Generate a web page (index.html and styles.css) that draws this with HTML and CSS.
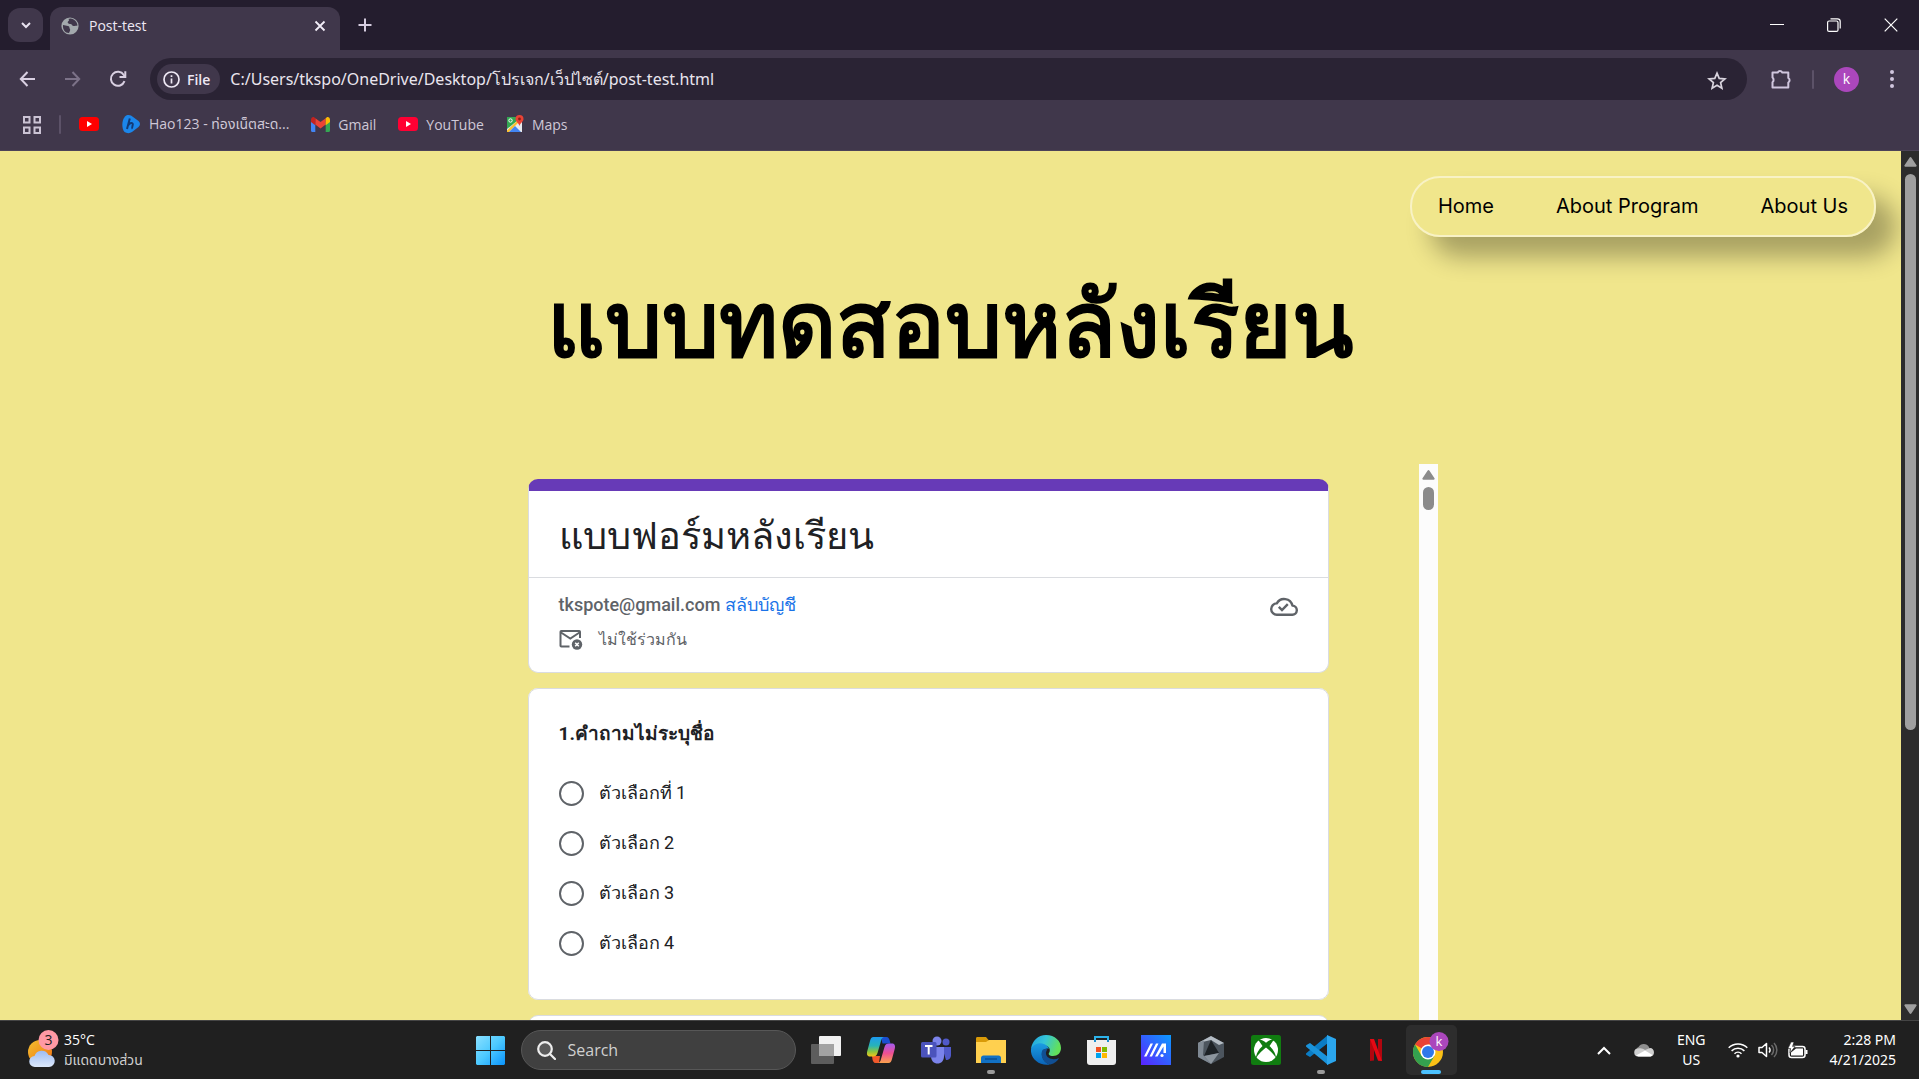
FILE: index.html
```html
<!DOCTYPE html>
<html lang="th">
<head>
<meta charset="utf-8">
<title>Post-test</title>
<meta name="viewport" content="width=device-width, initial-scale=1">
<link rel="stylesheet" href="styles.css">
</head>
<body>
<div class="desktop">

  <header class="browser">
    <div class="tabstrip">
      <button class="tab-search" aria-label="Search tabs"><svg width="12" height="12" viewBox="0 0 12 12" fill="none" stroke="#e8e2f0" stroke-width="2"><path d="M2 4l4 4 4-4"/></svg></button>
      <div class="tab">
        <svg width="18" height="18" viewBox="0 0 18 18"><circle cx="9" cy="9" r="8.6" fill="#a3a9ad"/><path d="M2 8c2 0 3 1 5 1 2 .3 1 2 2 3 .6 1.500-.5 2.500-1 4C4 16 1.600 12.500 2 8zM7 2c2 .5 1 1.500 0 2.500C6 5.500 7.500 7 9.500 7c1.500 0 1.500 2 3 2s2.500-.5 4-.6C16 5 13.500 2 9.500 1.600z" fill="#40374b"/></svg>
        <span class="tab-title">Post-test</span>
        <button class="icon-btn" aria-label="Close tab"><svg width="12" height="12" viewBox="0 0 12 12" stroke="#f2edf8" stroke-width="1.800"><path d="M1.500 1.500l9 9M10.500 1.500l-9 9"/></svg></button>
      </div>
      <button class="icon-btn new-tab" aria-label="New tab"><svg width="14" height="14" viewBox="0 0 14 14" stroke="#d6cde0" stroke-width="2"><path d="M7 .5v13M.5 7h13"/></svg></button>
      <div class="window-controls">
        <button class="win-btn" aria-label="Minimize"><svg width="14" height="14" viewBox="0 0 14 14" stroke="#fff"><path d="M0 6.500h14"/></svg></button>
        <button class="win-btn" aria-label="Restore"><svg width="14" height="14" viewBox="0 0 14 14" fill="none" stroke="#fff" stroke-width="1.200"><rect x=".6" y="3" width="10.400" height="10.400" rx="1.500"/><path d="M3.500 .8h7a2.700 2.700 0 0 1 2.700 2.700v7"/></svg></button>
        <button class="win-btn" aria-label="Close"><svg width="14" height="14" viewBox="0 0 14 14" stroke="#fff" stroke-width="1.200"><path d="M.7 .7l12.600 12.600M13.300 .7L.7 13.300"/></svg></button>
      </div>
    </div>

    <div class="toolbar">
      <button class="tool-btn" aria-label="Back"><svg width="17" height="16" viewBox="0 0 17 16" fill="none" stroke="#d9d0e2" stroke-width="2"><path d="M16 8H2M8.500 1L1.800 8l6.700 7"/></svg></button>
      <button class="tool-btn" aria-label="Forward"><svg width="17" height="16" viewBox="0 0 17 16" fill="none" stroke="#7c7288" stroke-width="2"><path d="M1 8h14M8.500 1l6.700 7-6.700 7"/></svg></button>
      <button class="tool-btn" aria-label="Reload"><svg width="18" height="18" viewBox="0 0 18 18" fill="none" stroke="#d9d0e2" stroke-width="2"><path d="M15.500 11.200A7 7 0 1 1 14.800 5L16 6.500"/><path d="M16.300 1.200v5.800h-5.800"/></svg></button>
      <div class="omnibox">
        <button class="chip"><svg width="17" height="17" viewBox="0 0 17 17" fill="none" stroke="#eee8f4" stroke-width="1.700"><circle cx="8.500" cy="8.500" r="7.500"/><path d="M8.500 7.500v5M8.500 4.200v1.900"/></svg>File</button>
        <input class="url" type="text" aria-label="Address" value="C:/Users/tkspo/OneDrive/Desktop/โปรเจก/เว็ปไซต์/post-test.html">
        <button class="icon-btn" aria-label="Bookmark this page"><svg width="20" height="20" viewBox="0 0 20 20" fill="none" stroke="#d9d4de" stroke-width="1.700"><path d="M10 2.200l2.200 5.200 5.700.5-4.300 3.700 1.300 5.600L10 14.200l-4.900 3 1.300-5.600L2.100 7.900l5.700-.5z"/></svg></button>
      </div>
      <button class="tool-btn ext" aria-label="Extensions"><svg width="22" height="22" viewBox="0 0 22 22"><path d="M2.500 4.500h5.200a2.600 2.600 0 0 1 4.600 0h6v5.500a2.600 2.600 0 0 1 0 4.500v5H2.500v-5.300a3 3 0 0 0 0-4.600z" fill="none" stroke="#d0c6de" stroke-width="2" stroke-linejoin="round"/></svg></button>
      <span class="divider"></span>
      <button class="avatar" aria-label="Profile">k</button>
      <button class="tool-btn menu" aria-label="Menu"><svg width="6" height="20" viewBox="0 0 6 20" fill="#d0c6de"><circle cx="3" cy="3" r="2"/><circle cx="3" cy="10" r="2"/><circle cx="3" cy="17" r="2"/></svg></button>
    </div>

    <nav class="bookmarks" aria-label="Bookmarks">
      <button class="icon-btn apps" aria-label="Apps"><svg width="18" height="18" viewBox="0 0 18 18" fill="none" stroke="#cbc3d4" stroke-width="2"><path d="M1 1h5.500v5.500H1zM11.500 1H17v5.500h-5.500zM1 11.500h5.500V17H1zM11.500 11.500H17V17h-5.500z"/></svg></button>
      <span class="divider"></span>
      <a href="#" aria-label="YouTube"><svg width="20" height="14" viewBox="0 0 20 14"><rect width="20" height="14" rx="3.500" fill="#f00"/><path d="M8 4l5 3-5 3z" fill="#fff"/></svg></a>
      <a href="#"><svg width="20" height="20" viewBox="0 0 20 20"><path d="M4 2.500C6 .5 8 .6 10 1.500l7.500 5.500c2 2 2 4 0 6L11 18c-2 1.500-5.500 1.500-7.500 0C.5 14.500 .5 6.500 4 2.500z" fill="#1b86ea"/><path d="M8.800 4.500L6 15M7 11.500c1.500-3 5-3.500 4.800-1-.2 1.700-1.300 3.500-.3 4.200" fill="none" stroke="#123a75" stroke-width="2"/></svg>Hao123 - ท่องเน็ตสะด...</a>
      <a href="#"><svg width="19" height="15" viewBox="0 0 19 15"><path d="M0 3v10.500C0 14.400.6 15 1.400 15H4.300V5z" fill="#4285f4"/><path d="M19 3v10.500c0 .9-.6 1.500-1.400 1.500h-2.900V5z" fill="#34a853"/><path d="M4.300 1.200v6.400L9.500 11.500l5.200-3.900V1.200L9.500 5.100z" fill="#ea4335"/><path d="M0 3v2l4.300 3.200v-7L3.400.5C2 -.5 0 .5 0 3z" fill="#c5221f"/><path d="M19 3v2l-4.300 3.200v-7l.9-.7C17 -.5 19 .5 19 3z" fill="#fbbc04"/></svg>Gmail</a>
      <a href="#"><svg width="20" height="14" viewBox="0 0 20 14"><rect width="20" height="14" rx="3.500" fill="#ff0033"/><path d="M8 4l5 3-5 3z" fill="#fff"/></svg>YouTube</a>
      <a href="#"><svg width="18" height="18" viewBox="0 0 18 18"><path d="M1 2h15v15H1z" fill="#e8eaed"/><path d="M1 2h10.500v3.500L1 14z" fill="#34a853"/><path d="M1 15.500L11 6l1.500 1.500L3 17H1z" fill="#fbc02d"/><path d="M3 17l6-6 6 6z" fill="#4285f4"/><circle cx="4.500" cy="5.500" r="1.700" fill="none" stroke="#fff"/><path d="M13.500 0a4 4 0 0 1 4 4c0 2.500-3 3.500-4 7-1-3.500-4-4.500-4-7a4 4 0 0 1 4-4z" fill="#ea4335"/><circle cx="13.500" cy="4" r="1.400" fill="#8c1d13"/></svg>Maps</a>
    </nav>
  </header>

  <div class="viewport">
    <main class="page">
      <nav class="site-nav" aria-label="Site">
        <a href="#">Home</a>
        <a href="#">About Program</a>
        <a href="#">About Us</a>
      </nav>
      <h1>แบบทดสอบหลังเรียน</h1>
      <div class="embed">
        <form class="form">
          <section class="card card-head">
            <h2>แบบฟอร์มหลังเรียน</h2>
            <div class="account">
              <div class="account-info">
                <p><strong>tkspote@gmail.com</strong> <a href="#">สลับบัญชี</a></p>
                <p class="shared"><svg width="24" height="22" viewBox="0 0 24 22"><path d="M10.500 17.500H2.300c-.5 0-.8-.3-.8-.8V2.800c0-.5.3-.8.8-.8h17.900c.5 0 .8.300.8.800V9M2 3.500l9.300 6 9.200-6" fill="none" stroke="#5f6368" stroke-width="2"/><circle cx="18" cy="15.500" r="5.200" fill="#5f6368"/><path d="M16.200 13.700l3.600 3.600M19.800 13.700l-3.600 3.600" stroke="#fff" stroke-width="1.500"/></svg><span>ไม่ใช้ร่วมกัน</span></p>
              </div>
              <svg class="cloud" width="28" height="20" viewBox="0 0 28 20" fill="none" stroke="#5f6368" stroke-width="2.400"><path d="M7 18.800h15a4.600 4.600 0 0 0 .4-9.200A8.400 8.400 0 0 0 6.800 7.400 5.700 5.700 0 0 0 7 18.800z" stroke-linejoin="round"/><path d="M8.800 10.800l3.200 3.200 5.800-5.900"/></svg>
            </div>
          </section>
          <fieldset class="card question">
            <legend>1.คำถามไม่ระบุชื่อ</legend>
            <label><input type="radio" name="q1">ตัวเลือกที่ 1</label>
            <label><input type="radio" name="q1">ตัวเลือก 2</label>
            <label><input type="radio" name="q1">ตัวเลือก 3</label>
            <label><input type="radio" name="q1">ตัวเลือก 4</label>
          </fieldset>
          <section class="card next"></section>
        </form>
        <div class="scrollbar light">
          <svg width="13" height="10" viewBox="0 0 13 10" fill="#8b8b8b"><path d="M5.500 .8a1.200 1.200 0 0 1 2 0l5 7.500a1 1 0 0 1-.9 1.500H1.400a1 1 0 0 1-.9-1.500z"/></svg>
          <span class="thumb"></span>
        </div>
      </div>
    </main>
    <div class="scrollbar dark">
      <svg width="13" height="10" viewBox="0 0 13 10" fill="#9f9f9f"><path d="M5.500 .8a1.200 1.200 0 0 1 2 0l5 7.500a1 1 0 0 1-.9 1.500H1.400a1 1 0 0 1-.9-1.500z"/></svg>
      <span class="track"><span class="thumb"></span></span>
      <svg width="13" height="10" viewBox="0 0 13 10" fill="#9f9f9f"><path d="M5.500 9.200a1.200 1.200 0 0 0 2 0l5-7.500a1 1 0 0 0-.9-1.500H1.400a1 1 0 0 0-.9 1.500z"/></svg>
    </div>
  </div>

  <footer class="taskbar">
    <button class="weather">
      <svg width="32" height="38" viewBox="0 0 32 38"><defs><linearGradient id="sun" x1="0" y1="0" x2="1" y2="1"><stop offset="0" stop-color="#f3c02f"/><stop offset="1" stop-color="#f06f12"/></linearGradient><linearGradient id="cl" x1="0" y1="0" x2="0" y2="1"><stop offset="0" stop-color="#9dbcf3"/><stop offset="1" stop-color="#dce8fb"/></linearGradient></defs><circle cx="13" cy="22" r="12" fill="url(#sun)"/><path d="M8 37a5.500 5.500 0 0 1-.5-11 7.500 7.500 0 0 1 14-1A6 6 0 0 1 22 37z" fill="url(#cl)"/><circle cx="21.500" cy="10" r="10" fill="#ff99a4"/><text x="21.500" y="15" text-anchor="middle" class="badge-num">3</text></svg>
      <span class="weather-text"><span>35°C</span><small>มีแดดบางส่วน</small></span>
    </button>

    <div class="dock">
      <button class="app" aria-label="Start"><svg width="29" height="29" viewBox="0 0 29 29"><defs><linearGradient id="win" x1="0" y1="0" x2="1" y2="1"><stop offset="0" stop-color="#8ae0ff"/><stop offset=".5" stop-color="#4cc9ff"/><stop offset="1" stop-color="#0a93fb"/></linearGradient></defs><path d="M1 0h13v14H0V1zM15 0h13l1 1v13H15zM0 15h14v14H1l-1-1zM15 15h14v13l-1 1H15z" fill="url(#win)"/></svg></button>
      <label class="search"><svg width="19" height="19" viewBox="0 0 19 19" fill="none" stroke="#eee" stroke-width="2.200"><circle cx="8" cy="8" r="6.800" fill="#5b5b5b"/><path d="M13 13l5 5" stroke-linecap="round"/></svg><input type="search" placeholder="Search" aria-label="Search"></label>
      <button class="app" aria-label="Task view"><svg width="30" height="28" viewBox="0 0 30 28"><rect x="8" width="22" height="20" rx="1" fill="#f1f1f1"/><rect y="8" width="23" height="20" rx="1" fill="#5d5d5d"/><path d="M8 8h15v12H8z" fill="#a3a3a3"/></svg></button>
      <button class="app" aria-label="Copilot"><svg width="30" height="28" viewBox="0 0 30 28"><defs><linearGradient id="cp1" x1="0" y1="0" x2="0" y2="1"><stop offset="0" stop-color="#1d9bf0"/><stop offset=".45" stop-color="#27b3b8"/><stop offset=".75" stop-color="#8bc63f"/><stop offset="1" stop-color="#f5c518"/></linearGradient><linearGradient id="cp2" x1="0" y1="0" x2="0" y2="1"><stop offset="0" stop-color="#a45bf0"/><stop offset=".5" stop-color="#ee4f93"/><stop offset="1" stop-color="#fba34d"/></linearGradient></defs><path d="M15 1h5.500c2 0 2.500 1.500 3 3l1 3.500h-8z" fill="#1b4fd1"/><path d="M6 20h8l-1 7H9.500c-2 0-2.500-2-3-3.500z" fill="#f0592b"/><path d="M7.500 1H18c-2 .5-2.500 2-3 4l-3.500 12c-.7 2.500-2 3.500-4.500 3.500H4C1 20.500 .5 18 1.300 15L4 5c.7-2.500 1.500-4 3.500-4z" fill="url(#cp1)"/><path d="M22.500 27H12c2-.5 2.500-2 3-4l3.500-12c.7-2.500 2-3.500 4.500-3.500h3c3 0 3.500 2.500 2.700 5.500L26 23c-.7 2.500-1.500 4-3.500 4z" fill="url(#cp2)"/></svg></button>
      <button class="app" aria-label="Teams"><svg width="30" height="28" viewBox="0 0 30 28"><circle cx="25" cy="6" r="3.500" fill="#5059c9"/><path d="M21 11h9v8c0 3-2 5-5 5z" fill="#5059c9"/><circle cx="16" cy="5" r="4.500" fill="#7b83eb"/><path d="M10 11h13v9c0 5-3 7.500-6.500 7.500S10 25 10 20z" fill="#7b83eb"/><rect y="6" width="15.500" height="15.500" rx="1.500" fill="#4b53bc"/><path d="M4 10h7.500M7.700 10v8.500" stroke="#fff" stroke-width="2"/></svg></button>
      <button class="app running" aria-label="File Explorer"><svg width="30" height="28" viewBox="0 0 30 28"><path d="M0 2.500C0 1.500.5 1 1.500 1H10l3 3.500V10H0z" fill="#d99a08"/><path d="M0 6h10l3-2h17v23H0z" fill="#ffd04f"/><path d="M5 27v-5c0-1.500 1-2.500 2.500-2.500h15c1.500 0 2.500 1 2.500 2.500v5z" fill="#1271c4"/><path d="M9 23h12" stroke="#0a4f93" stroke-width="1.500"/></svg></button>
      <button class="app" aria-label="Edge"><svg width="30" height="30" viewBox="0 0 30 30"><defs><linearGradient id="e1" x1="0" y1="0" x2="1" y2=".3"><stop offset="0" stop-color="#1ea0de"/><stop offset=".5" stop-color="#35c5d8"/><stop offset="1" stop-color="#62e05a"/></linearGradient><linearGradient id="e2" x1="0" y1="0" x2="0" y2="1"><stop offset="0" stop-color="#1b9de2"/><stop offset="1" stop-color="#0a63b8"/></linearGradient></defs><path d="M0 14C1 6 7 0 15 0c9 0 15 6 15 13 0 5-3.500 8-8 8-3.500 0-5-1.500-4-3 2-2.500.5-7.500-4.500-7.500C8 10.500 3 11 0 14z" fill="url(#e1)"/><path d="M0 14c3-5.500 9-6.500 13-5 3 1 4.500 3 5 5-1.500-1-6-.5-7 4-1 5 4 11 8 11.500C9 31.500-1 24 0 14z" fill="url(#e2)"/><path d="M11.500 15c-3 6 1.500 14 8 14.500 4-1 7-3.500 8.500-6.500-5 2.500-12 1-13-4-.3-2 .5-3.500 1.500-4.500-2-.8-4-.5-5 .5z" fill="#114f93"/></svg></button>
      <button class="app" aria-label="Microsoft Store"><svg width="29" height="30" viewBox="0 0 29 30"><path d="M8 7V2h13v5" fill="none" stroke="#2cb3ea" stroke-width="2"/><path d="M0 5h29v22a3 3 0 0 1-3 3H3a3 3 0 0 1-3-3z" fill="#efefef"/><path d="M8 5v2M21 5v2" stroke="#1d8fd0" stroke-width="2"/><path d="M9 12h5v5H9z" fill="#f25022"/><path d="M15 12h5v5h-5z" fill="#7fba00"/><path d="M9 18h5v5H9z" fill="#00a4ef"/><path d="M15 18h5v5h-5z" fill="#ffb900"/></svg></button>
      <button class="app" aria-label="MyASUS"><svg width="30" height="30" viewBox="0 0 30 30"><defs><linearGradient id="as" x1="0" y1="1" x2="1" y2="0"><stop offset="0" stop-color="#5b22ff"/><stop offset="1" stop-color="#0b9bff"/></linearGradient></defs><path d="M0 0h30v30H0z" fill="url(#as)"/><path d="M3 21.500L9.500 8.500H12L5.500 21.500zM8.500 21.500L15 8.500h2.500L11 21.500zM14 21.500L21 8.500h4V18h-2.500v-6.500L16.500 21.500z" fill="#fff"/><circle cx="21" cy="20.500" r="1.600" fill="#fff"/></svg></button>
      <button class="app" aria-label="Armoury Crate"><svg width="26" height="28" viewBox="0 0 26 28"><path d="M13 0l13 7v14l-13 7L0 21V7z" fill="#4c555e"/><path d="M13 0l13 7-5 2-8-5L0 7z" fill="#b4bcc4"/><path d="M0 7l6-2.500L5 19l8 9L0 21z" fill="#7f8993"/><path d="M13 4l8 13-15 3z" fill="#1d2226"/><path d="M6 20l15-3-8 11z" fill="#8c959e"/></svg></button>
      <button class="app" aria-label="Xbox"><svg width="30" height="30" viewBox="0 0 30 30"><rect width="30" height="30" rx="2.500" fill="#107c10"/><circle cx="15" cy="15" r="12" fill="#fff"/><path d="M7 4.500c3-.3 6 1.500 8 3.300 2-1.800 5-3.600 8-3.300L18.500 11c4 3.500 6.500 8.500 6.500 12-2.500-4-6.500-8-10-10.500C11.500 15 7.500 19 5 23c0-3.500 2.500-8.500 6.500-12z" fill="#107c10"/></svg></button>
      <button class="app running" aria-label="Visual Studio Code"><svg width="30" height="30" viewBox="0 0 30 30"><path d="M22 8L4 22l-3.500-2c-.7-.7-.7-1.500 0-2L22 0z" fill="#0b7cc4"/><path d="M22 22L4 8 .5 10c-.7.700-.7 1.500 0 2L22 30z" fill="#1a93da"/><path d="M21 0l9 4v22l-9 4z" fill="#2ba6ee"/></svg></button>
      <button class="app" aria-label="Netflix"><svg width="12" height="22" viewBox="0 0 12 22"><path d="M0 0h4v21.500L0 22zM8 0h4v22l-4-.5z" fill="#b1060f"/><path d="M0 0h4l8 22-4-.5z" fill="#e50914"/></svg></button>
      <button class="app active" aria-label="Chrome"><svg width="36" height="36" viewBox="0 0 36 36"><circle cx="15" cy="20" r="15" fill="#fbc116"/><path d="M15 20L2 12.500A15 15 0 0 1 28 12.500H15z" fill="#ea4335"/><path d="M2 12.500A15 15 0 0 0 15 35l6.500-11.300L15 20 8.500 23.700z" fill="#34a04f"/><circle cx="15" cy="20" r="7.500" fill="#fff"/><circle cx="15" cy="20" r="6" fill="#2f78ea"/><circle cx="26" cy="9.500" r="9.500" fill="#ab47bc"/><text x="26" y="14" text-anchor="middle" class="badge-k">k</text></svg></button>
    </div>

    <div class="tray">
      <button class="icon-btn" aria-label="Hidden icons"><svg width="14" height="9" viewBox="0 0 14 9" fill="none" stroke="#fff" stroke-width="2"><path d="M1 8l6-6 6 6"/></svg></button>
      <svg class="onedrive" width="20" height="14" viewBox="0 0 20 14"><path d="M5 13a5 5 0 0 1-.5-9A6 6 0 0 1 15 4l2 8z" fill="#8e8e8e"/><path d="M4.500 13.500a4 4 0 0 1-.5-8c3-.8 5 0 7 1.500l5-2a4.300 4.300 0 0 1 .5 8.500z" fill="#cfcfcf"/><path d="M2 12.500L11 7.500l7.500 4.500a4 4 0 0 1-2 1.500h-12z" fill="#fff"/></svg>
      <button class="lang"><span>ENG</span><span>US</span></button>
      <button class="status" aria-label="Network, sound, battery">
        <svg width="20" height="16" viewBox="0 0 20 16" fill="none" stroke="#fff" stroke-width="1.500"><path d="M.7 5.800a13 13 0 0 1 18.600 0M3.600 8.900a9 9 0 0 1 12.800 0M6.500 11.700a5 5 0 0 1 7 0"/><circle cx="10" cy="14" r="1.600" fill="#fff" stroke="none"/></svg>
        <svg width="20" height="16" viewBox="0 0 20 16" fill="none" stroke="#fff" stroke-width="1.500"><path d="M1 5.500h3L8.500 1.500v13L4 10.500H1z" stroke-linejoin="round"/><path d="M11 5.500a3.500 3.500 0 0 1 0 5"/><path d="M13.500 3a7 7 0 0 1 0 10M16 1a10 10 0 0 1 0 14" stroke="#6a6a6a"/></svg>
        <svg width="20" height="17" viewBox="0 0 20 17"><rect x="1" y="4.500" width="16" height="11" rx="2.500" fill="none" stroke="#fff" stroke-width="1.500"/><path d="M8 6.500h7v7H3v-3z" fill="#fff"/><path d="M17.500 8h2v4h-2z" fill="#fff"/><path d="M3 0L0 6.500h2.500L2 11l5-6.500H4.500L6 0z" fill="#fff" stroke="#202020" stroke-width=".6"/></svg>
      </button>
      <button class="clock"><span>2:28 PM</span><span>4/21/2025</span></button>
    </div>
  </footer>
</div>
</body>
</html>
```
FILE: styles.css
```css
* { box-sizing: border-box; }

body {
  margin: 0;
  font-family: "Open Sans", "Noto Sans", "Noto Sans Thai", sans-serif;
}

button {
  margin: 0;
  padding: 0;
  border: 0;
  background: none;
  color: inherit;
  font: inherit;
}

svg { display: block; flex: none; }

.desktop {
  display: flex;
  flex-direction: column;
  height: 100vh;
  overflow: hidden;
}

/* Browser window chrome */
.browser {
  background: #40374b;
  border-bottom: 1px solid #4c4358;
}

.tabstrip {
  display: flex;
  align-items: center;
  height: 50px;
  padding-left: 8px;
  background: #241d2e;
  color: #eee8f4;
}

.tab-search {
  display: grid;
  place-items: center;
  width: 35px;
  height: 34px;
  border-radius: 12px;
  background: #40374b;
}

.tab {
  display: flex;
  align-items: center;
  align-self: flex-end;
  gap: 10px;
  width: 290px;
  height: 43px;
  margin-left: 7px;
  padding: 0 12px 6px 11px;
  border-radius: 12px 12px 0 0;
  background: #40374b;
  font-size: 14px;
}

.tab-title { flex: 1; }

.icon-btn {
  display: grid;
  place-items: center;
  width: 16px;
  height: 16px;
}

.new-tab { margin-left: 17px; }

.window-controls {
  display: flex;
  margin-left: auto;
}

.win-btn {
  display: grid;
  place-items: center;
  width: 57px;
  height: 50px;
}

.toolbar {
  display: flex;
  align-items: center;
  height: 58px;
  padding: 0 16px 0 5px;
}

.tool-btn {
  display: grid;
  place-items: center;
  width: 45px;
  height: 40px;
}

.omnibox {
  display: flex;
  align-items: center;
  flex: 1;
  height: 42px;
  margin-left: 10px;
  padding: 0 24px 0 7px;
  border-radius: 21px;
  background: #2a2334;
}

.chip {
  display: flex;
  align-items: center;
  gap: 7px;
  height: 30px;
  padding: 0 10px 0 6px;
  border-radius: 15px;
  background: #40374b;
  color: #eee8f4;
  font-size: 14px;
  font-weight: 600;
}

.url {
  flex: 1;
  height: 32px;
  padding: 0 10px;
  border: 0;
  outline: 0;
  background: none;
  color: #e9e5ee;
  font: 16px "Noto Sans", sans-serif;
}

.ext { margin-left: 11px; }

.divider {
  width: 2px;
  height: 19px;
  border-radius: 1px;
  background: #5c5268;
}

.toolbar .divider { margin: 0 20px 0 9px; }

.avatar {
  width: 25px;
  height: 25px;
  border-radius: 50%;
  background: #ab47bc;
  color: #fff;
  font-size: 14px;
  line-height: 24px;
}

.menu {
  width: 22px;
  margin-left: 22px;
}

.bookmarks {
  display: flex;
  align-items: center;
  gap: 22px;
  height: 42px;
  padding: 0 23px 10px;
  color: #cfc8d7;
  font-size: 14px;
}

.bookmarks .divider { margin: 0 -4px; }

.bookmarks a {
  display: flex;
  align-items: center;
  gap: 8px;
  color: inherit;
  text-decoration: none;
}

.apps { width: 18px; }

/* Web page */
.viewport {
  display: flex;
  flex: 1;
  min-height: 0;
}

.page {
  display: flex;
  flex: 1;
  flex-direction: column;
  min-width: 0;
  overflow: hidden;
  background: #f0e68c;
}

.site-nav {
  display: flex;
  align-items: center;
  align-self: flex-end;
  gap: 62px;
  height: 61px;
  margin: 25px 25px 0;
  padding: 0 26px 2px;
  border: 2px solid #f8f2c5;
  border-radius: 30px;
  box-shadow: 20px 20px 25px rgba(0, 0, 0, .3);
  font-family: Inter, sans-serif;
  font-size: 20px;
}

.site-nav a {
  color: #000;
  text-decoration: none;
}

h1 {
  margin: 24px 0 83px;
  font-family: "Noto Sans", sans-serif;
  font-size: 90px;
  line-height: 120px;
  text-align: center;
}

.embed {
  display: flex;
  flex: 1;
  align-self: center;
  width: 1000px;
  max-width: 100%;
  min-height: 0;
  margin-right: 26px;
  overflow: hidden;
}

.form {
  display: flex;
  flex: 1;
  flex-direction: column;
  align-items: center;
  gap: 15px;
  min-width: 0;
  padding-top: 15px;
  font-family: Roboto, "Noto Sans", sans-serif;
}

.card {
  flex: none;
  width: 100%;
  max-width: 801px;
  margin: 0;
  border: 1px solid #dadce0;
  border-radius: 10px;
  background: #fff;
  color: #202124;
}

.card-head { border-top: 12px solid #673ab7; }

h2 {
  margin: 0;
  padding: 17px 30px 13px;
  border-bottom: 1px solid #dadce0;
  font-size: 38px;
  font-weight: 400;
  line-height: 56px;
}

.account {
  display: flex;
  align-items: flex-start;
  justify-content: space-between;
  padding: 15px 30px;
  color: #5f6368;
  font-size: 18px;
  line-height: 24px;
}

.account p { margin: 0; }

.account strong { font-weight: 500; }

.account a {
  color: #1a73e8;
  text-decoration: none;
}

.account .shared {
  display: flex;
  align-items: center;
  gap: 16px;
  margin: 11px 0 5px;
  font-size: 16px;
}

.cloud { margin-top: 3px; }

.question {
  display: flex;
  flex-direction: column;
  padding: 30px 30px 31px;
  font-size: 18px;
  line-height: 30px;
}

.question legend {
  float: left;
  margin-bottom: 19px;
  padding: 0;
  font-size: 19px;
  font-weight: 700;
}

.question label {
  display: flex;
  align-items: center;
  gap: 15px;
  height: 50px;
}

.question input {
  appearance: none;
  width: 25px;
  height: 25px;
  margin: 0;
  border: 2px solid #5f6368;
  border-radius: 50%;
}

.next { height: 310px; }

/* Scroll bars */
.scrollbar {
  display: flex;
  flex: none;
  flex-direction: column;
  align-items: center;
  gap: 7px;
  padding: 6px 0;
}

.light {
  width: 19px;
  background: #fcfcfc;
}

.light .thumb {
  width: 11px;
  height: 23px;
  border-radius: 6px;
  background: #8b8b8b;
}

.dark {
  width: 18px;
  background: #2c2c2c;
}

.dark .track { flex: 1; }

.dark .thumb {
  display: block;
  width: 11px;
  height: 67.5%;
  border-radius: 6px;
  background: #9f9f9f;
}

/* Taskbar */
.taskbar {
  display: grid;
  grid-template-columns: 1fr auto 1fr;
  align-items: center;
  height: 59px;
  border-top: 1px solid #454545;
  background: #202020;
  color: #fff;
}

.weather {
  display: flex;
  gap: 5px;
  margin-left: 27px;
  font-size: 14px;
  line-height: 20px;
  text-align: left;
}

.weather-text,
.lang,
.clock {
  display: flex;
  flex-direction: column;
}

.weather small {
  color: #cfcfcf;
  font-size: 14px;
}

.badge-num {
  fill: #222;
  font-size: 14px;
}

.badge-k {
  fill: #fff;
  font-size: 13px;
}

.dock {
  display: flex;
  align-items: center;
  padding-left: 2px;
}

.app {
  display: grid;
  place-items: center;
  position: relative;
  width: 51px;
  height: 50px;
  margin: 0 2px;
  border-radius: 5px;
}

.active { background: #2d2d2d; }

.running::after,
.active::after {
  content: "";
  position: absolute;
  bottom: 1px;
  left: 50%;
  width: 8px;
  height: 4px;
  border-radius: 2px;
  background: #9a9a9a;
  transform: translateX(-50%);
}

.active::after {
  width: 20px;
  background: #4cc2ff;
}

.search {
  display: flex;
  align-items: center;
  gap: 12px;
  width: 275px;
  height: 40px;
  margin: 0 3px;
  padding: 0 15px;
  border: 1px solid #575757;
  border-radius: 20px;
  background: #404040;
}

.search input {
  flex: 1;
  min-width: 0;
  padding: 0;
  border: 0;
  outline: 0;
  background: none;
  color: #fff;
  font: 16px "Open Sans", sans-serif;
}

.search input::placeholder { color: #d0d0d0; opacity: 1; }

.tray {
  display: flex;
  align-items: center;
  justify-content: flex-end;
  padding-right: 23px;
  font-family: "Noto Sans", sans-serif;
  font-size: 14px;
  line-height: 20px;
}

.onedrive { margin-left: 22px; }

.lang {
  align-items: center;
  margin-left: 23px;
}

.status {
  display: flex;
  align-items: center;
  gap: 10px;
  margin-left: 22px;
}

.clock {
  align-items: flex-end;
  margin-left: 22px;
}
```
